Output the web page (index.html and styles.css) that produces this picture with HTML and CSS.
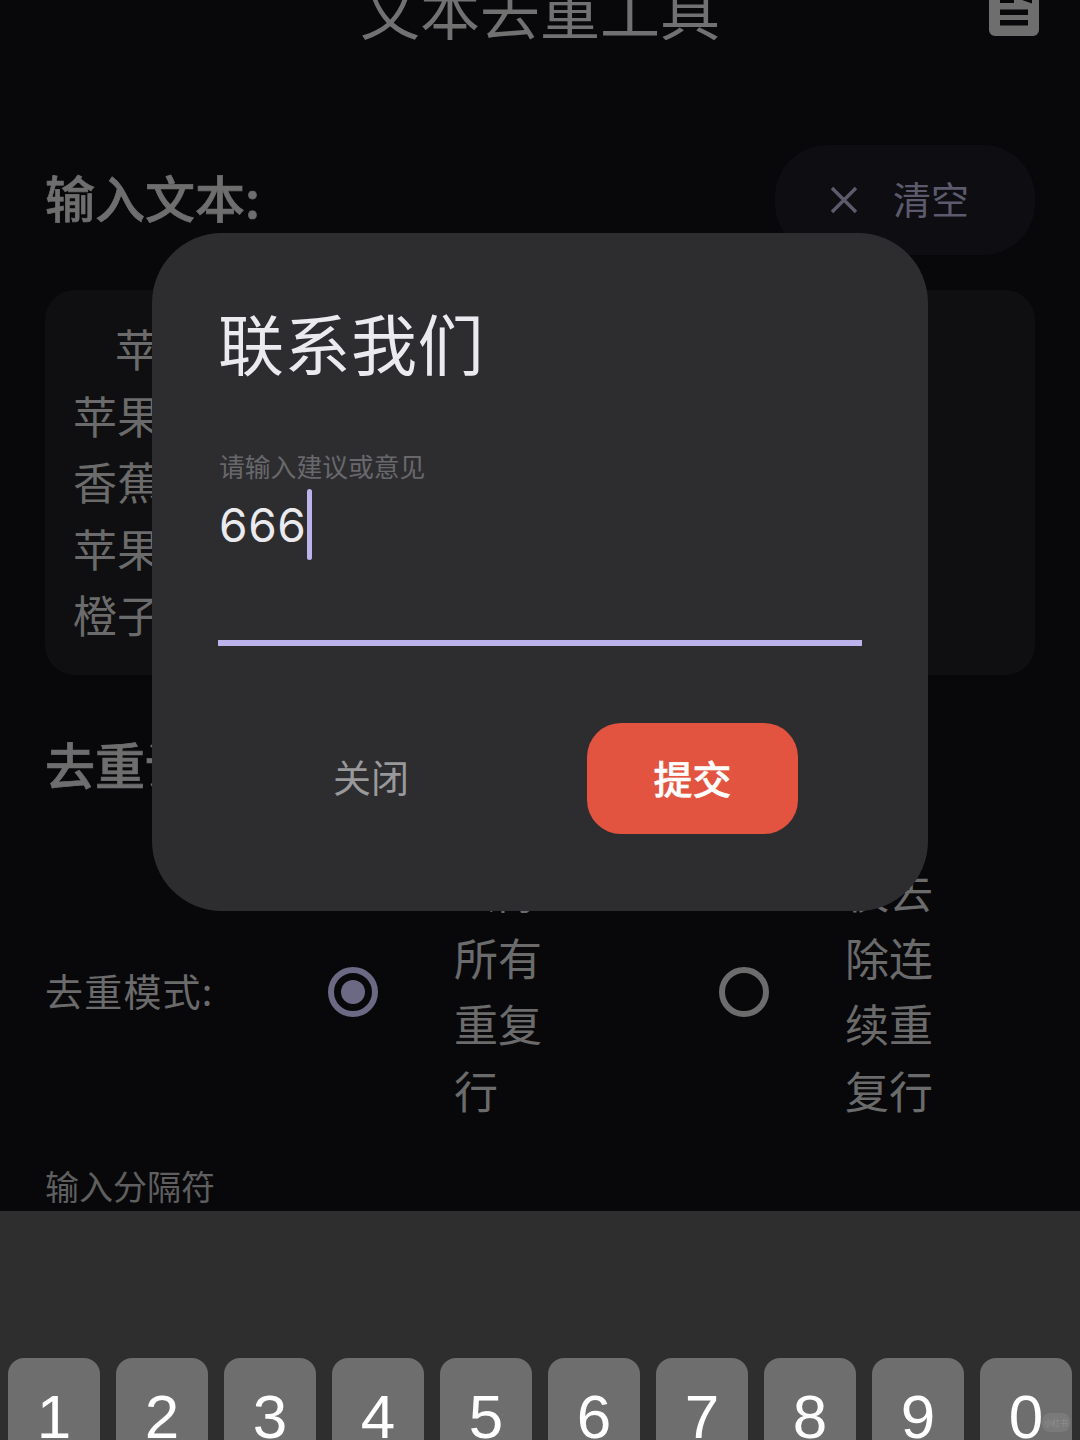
FILE: index.html
```html
<!DOCTYPE html>
<html lang="zh-CN">
<head>
<meta charset="utf-8">
<title>文本去重工具</title>
<link rel="stylesheet" href="styles.css">
</head>
<body>
<div class="page">
  <main class="content">
    <header class="topbar">
      <h1 class="app-title">文本去重工具</h1>
      <svg class="doc-icon" viewBox="0 0 50 36" aria-hidden="true">
        <path fill="#6e6e6e" fill-rule="evenodd" d="M0 0H11V3H25V0H33L43 3.5V0H50V30a6 6 0 0 1-6 6H6a6 6 0 0 1-6-6ZM11 9.5V15H39V9.5ZM11 20V25.5H39V20Z"/>
      </svg>
    </header>

    <div class="section-row">
      <h2 class="section-title">输入文本:</h2>
      <div class="clear-btn">
        <svg class="clear-icon" viewBox="0 0 28 28" aria-hidden="true"><path d="M2 2L26 26M26 2L2 26" stroke="#5c5a6c" stroke-width="3.4" fill="none"/></svg>
        <span>清空</span>
      </div>
    </div>

    <div class="text-box">
      <div class="indented">苹果</div>
      <div>苹果</div>
      <div>香蕉</div>
      <div>苹果</div>
      <div>橙子</div>
    </div>

    <h2 class="section-title settings-title">去重设置</h2>

    <div class="mode-row">
      <div class="mode-label">去重模式:</div>
      <div class="option">
        <span class="radio radio-on"></span>
        <span class="option-text">去除所有重复行</span>
      </div>
      <div class="option">
        <span class="radio"></span>
        <span class="option-text">仅去除连续重复行</span>
      </div>
    </div>

    <div class="delimiter">输入分隔符</div>
  </main>

  <div class="keyboard">
    <div class="keys">
      <div class="key">1</div><div class="key">2</div><div class="key">3</div><div class="key">4</div><div class="key">5</div>
      <div class="key">6</div><div class="key">7</div><div class="key">8</div><div class="key">9</div><div class="key">0</div>
    </div>
  </div>

  <div class="watermark">小红书</div>

  <section class="dialog">
    <h2 class="dialog-title">联系我们</h2>
    <div class="field">
      <div class="field-label">请输入建议或意见</div>
      <div class="field-value"><span>666</span><i class="caret"></i></div>
    </div>
    <div class="actions">
      <div class="btn-close">关闭</div>
      <div class="btn-submit"><span class="submit-text">提交</span></div>
    </div>
  </section>
</div>
</body>
</html>
```

FILE: styles.css
```css
* { box-sizing: border-box; }
html, body { margin: 0; padding: 0; background: #08080b; }
body { font-family: "Noto Sans CJK SC", "Liberation Sans", sans-serif; }

.page {
  position: relative;
  width: 1080px;
  height: 1440px;
  overflow: hidden;
  display: flex;
  flex-direction: column;
  background: #08080b;
}

.content {
  height: 1211px;
  flex: none;
  overflow: hidden;
  padding: 0 45px;
}

.topbar {
  position: relative;
  height: 84px;
  margin-top: -30px;
  display: flex;
  justify-content: center;
  align-items: flex-start;
}
.app-title {
  margin: -3px 0 0;
  font-size: 60px;
  line-height: 84px;
  font-weight: 400;
  color: #717171;
}
.doc-icon {
  position: absolute;
  right: -4px;
  top: 30px;
  width: 50px;
  height: 36px;
}

.section-row {
  margin-top: 91px;
  height: 110px;
  display: flex;
  justify-content: space-between;
  align-items: center;
}
.section-title {
  margin: 0 0 8px;
  font-size: 50px;
  line-height: 60px;
  font-weight: 500;
  -webkit-text-stroke: 0.7px #6e6e6e;
  color: #6e6e6e;
}
.clear-btn {
  width: 260px;
  height: 110px;
  border-radius: 52px;
  background: #0e0e12;
  display: flex;
  align-items: center;
  padding-left: 55px;
  gap: 35px;
  font-size: 38px;
  line-height: 50px;
  color: #5c5a6c;
}
.clear-btn span { margin-bottom: 4px; }
.clear-icon { width: 28px; height: 28px; flex: none; }

.text-box {
  margin-top: 35px;
  height: 385px;
  border-radius: 30px;
  background: #0f0f11;
  padding: 25px 28px 0;
  font-size: 44px;
  line-height: 66.5px;
  color: #6b6b6b;
}
.indented { text-indent: 42px; }

.settings-title { margin: 58px 0 2px; }

.mode-row {
  margin-top: 68px;
  display: flex;
  align-items: center;
}
.mode-label {
  width: 283px;
  flex: none;
  font-size: 38px;
  line-height: 50px;
  letter-spacing: 1.2px;
  color: #6b6b6b;
  margin-bottom: 4px;
}
.option {
  width: 391px;
  flex: none;
  display: flex;
  align-items: center;
  gap: 77px;
}
.option-text {
  width: 90px;
  margin: -4px 0 0 -1px;
  font-size: 44px;
  line-height: 66.5px;
  color: #6b6b6b;
}
.radio {
  width: 50px;
  height: 50px;
  flex: none;
  border-radius: 50%;
  border: 6px solid #6c6c6c;
}
.radio-on {
  border-color: #6c6984;
  padding: 7px;
  background: #6c6984 content-box;
}

.delimiter {
  margin-top: 43px;
  font-size: 34px;
  line-height: 40px;
  color: #5f5f5f;
}

.keyboard {
  flex: 1;
  background: #2e2e2e;
  padding: 147px 8px 0;
}
.keys {
  display: flex;
  gap: 16px;
}
.key {
  width: 92px;
  height: 120px;
  flex: none;
  border-radius: 16px;
  background: #6e6e6e;
  color: #fff;
  font-family: "Liberation Sans", sans-serif;
  font-size: 62px;
  line-height: 70px;
  padding-top: 24px;
  text-align: center;
}

.watermark {
  position: absolute;
  left: 1042px;
  top: 1413px;
  width: 28px;
  height: 19px;
  border-radius: 8px;
  background: #7a7a7a;
  color: #929292;
  font-size: 8px;
  line-height: 19px;
  text-align: center;
  white-space: nowrap;
}

.dialog {
  position: absolute;
  left: 152px;
  top: 233px;
  width: 776px;
  height: 678px;
  border-radius: 70px;
  background: #2d2d30;
  padding: 63px 66px 0;
}
.dialog-title {
  margin: 0;
  font-size: 66px;
  line-height: 90px;
  font-weight: 400;
  letter-spacing: 0.5px;
  color: #ebebef;
}
.field {
  border-bottom: 6px solid #bdb3ec;
  height: 260px;
  padding-top: 64px;
}
.field-label {
  font-size: 25.8px;
  line-height: 32px;
  color: #68686c;
  padding-left: 1px;
}
.field-value {
  display: flex;
  align-items: center;
  height: 71px;
  margin-top: 7px;
  padding-left: 1px;
  font-family: Inter, sans-serif;
  font-size: 46px;
  font-weight: 400;
  letter-spacing: 0.6px;
  color: #ebebef;
}
.caret {
  width: 5px;
  height: 71px;
  margin-left: 1px;
  border-radius: 3px;
  background: #bdb3ec;
}
.actions {
  margin-top: 77px;
  display: flex;
  align-items: center;
  padding-left: 115px;
}
.btn-close {
  width: 254px;
  font-size: 38px;
  line-height: 50px;
  color: #99999c;
  margin-bottom: 6px;
}
.btn-submit {
  width: 211px;
  height: 111px;
  border-radius: 34px;
  background: #e35440;
  color: #fff;
  font-size: 39px;
  font-weight: 500;
  -webkit-text-stroke: 0.5px #fff;
  display: flex;
  align-items: center;
  justify-content: center;
}
.submit-text { margin-bottom: 4px; }
```
